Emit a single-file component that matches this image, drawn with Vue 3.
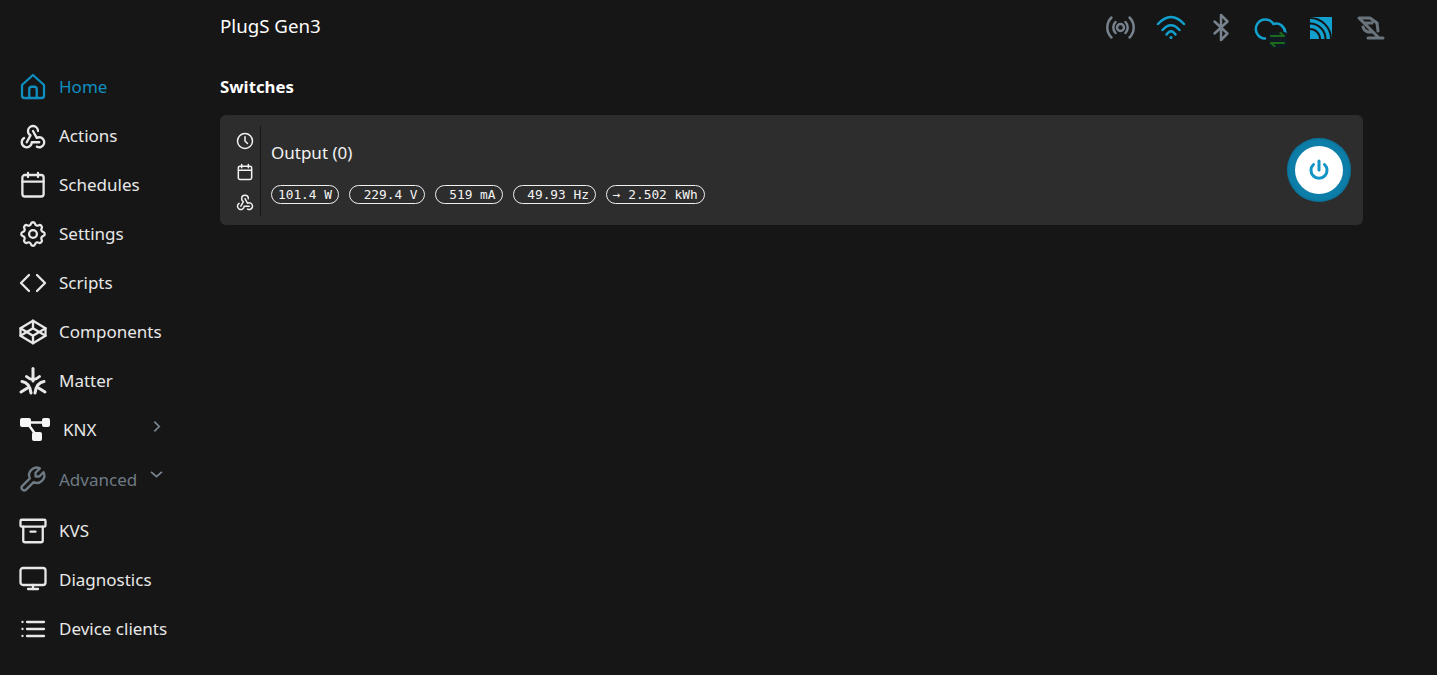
<script setup>
const top = [
  { vb: '0 0 24 24', d: ['M3.200 10.400L12 2.400l8.800 8V19a1.800 1.800 0 0 1-1.800 1.800H5A1.800 1.800 0 0 1 3.200 19z', 'M9 20.800v-7a2 2 0 0 1 2-2h2a2 2 0 0 1 2 2v7'], label: 'Home', active: true },
  { vb: '0 0 24 24', d: ['M4.876 13.610a4 4 0 1 0 6.124 3.390h6', 'M15.066 20.502a4 4 0 1 0 1.934-7.502c-.706 0-1.424.179-2 .5l-3-5.500', 'M16 8a4 4 0 1 0-8 0c0 1.506.77 2.818 2 3.500l-3 5.500'], label: 'Actions' },
  { vb: '0 0 24 24', d: ['M3.500 6a2 2 0 0 1 2-2h13a2 2 0 0 1 2 2v13.200a2 2 0 0 1-2 2h-13a2 2 0 0 1-2-2z', 'M16 2.400v3.200', 'M8 2.400v3.200', 'M3.500 9.300h17'], label: 'Schedules' },
  { vb: '0.500 0.500 23 23', d: ['M10.325 4.317c.426-1.756 2.924-1.756 3.350 0a1.724 1.724 0 0 0 2.573 1.066c1.543-.94 3.310.826 2.370 2.370a1.724 1.724 0 0 0 1.065 2.572c1.756.426 1.756 2.924 0 3.350a1.724 1.724 0 0 0-1.066 2.573c.94 1.543-.826 3.310-2.370 2.370a1.724 1.724 0 0 0-2.572 1.065c-.426 1.756-2.924 1.756-3.350 0a1.724 1.724 0 0 0-2.573-1.066c-1.543.94-3.310-.826-2.370-2.370a1.724 1.724 0 0 0-1.065-2.572c-1.756-.426-1.756-2.924 0-3.350a1.724 1.724 0 0 0 1.066-2.573c-.94-1.543.826-3.310 2.370-2.370 1 .608 2.296.07 2.572-1.065z', 'M9 12a3 3 0 1 0 6 0 3 3 0 0 0-6 0'], label: 'Settings' },
  { vb: '0 0 24 24', d: ['M8.800 5.600L2.400 12l6.400 6.400', 'M15.200 5.600L21.600 12l-6.400 6.400'], label: 'Scripts' },
  { vb: '0 0 24 24', d: ['M2 15l10 6 10-6-10-6z', 'M2 9l10 6 10-6-10-6z', 'M2 9v6', 'M22 9v6', 'M12 3v6', 'M12 15v6'], label: 'Components' },
]
const bottom = [
  { vb: '0 0 24 24', d: ['M3 3h18a1 1 0 0 1 1 1v3.500a1 1 0 0 1-1 1H3a1 1 0 0 1-1-1V4a1 1 0 0 1 1-1z', 'M4.200 8.500V20a1 1 0 0 0 1 1h13.600a1 1 0 0 0 1-1V8.500', 'M10 12.500h4'], label: 'KVS' },
  { vb: '0 0 24 24', d: ['M4 2.400h16a2 2 0 0 1 2 2V14a2 2 0 0 1-2 2H4a2 2 0 0 1-2-2V4.400a2 2 0 0 1 2-2z', 'M8 19.200h8', 'M12 16v3.200'], label: 'Diagnostics' },
  { vb: '0 0 24 24', d: ['M7.200 6.400h13.600', 'M7.200 12h13.600', 'M7.200 17.600h13.600', 'M3.600 6.400h.01', 'M3.600 12h.01', 'M3.600 17.600h.01'], label: 'Device clients' },
]
const pills = ['101.4 W', ' 229.4 V', ' 519 mA', ' 49.93 Hz', '→ 2.502 kWh']
</script>

<template>
  <div class="page">
    <aside class="side">
      <nav class="nav">
        <a v-for="it in top" :key="it.label" class="item" :class="{ active: it.active }">
          <svg class="ic" :viewBox="it.vb"><path v-for="p in it.d" :key="p" :d="p" /></svg>
          <span>{{ it.label }}</span>
        </a>
        <a class="item">
          <svg class="ic matter" viewBox="0 0 30 30">
            <path d="M15 2.500V15" />
            <path d="M8.500 10.500Q15 16.500 21.500 10.500" />
            <path d="M3 26L9.500 22" />
            <path d="M4 15.500Q11.500 16.500 13 27" />
            <path d="M27 26L20.500 22" />
            <path d="M26 15.500Q18.500 16.500 17 27" />
          </svg>
          <span>Matter</span>
        </a>
        <a class="item knx">
          <svg class="knxic" viewBox="0 0 30 23">
            <rect x="0" y="0" width="11" height="9" rx="2" />
            <rect x="22" y="0" width="8" height="9" rx="2" />
            <rect x="12" y="14" width="10" height="9" rx="2" />
            <path d="M9 4.500h15M8 6l8 11" />
          </svg>
          <span>KNX</span>
          <svg class="chev" viewBox="0 0 12 12"><path d="M4 1.500L8.500 6 4 10.500" /></svg>
        </a>
        <a class="item advanced">
          <svg class="ic" viewBox="0 0 24 24"><path transform="translate(24 0) scale(-1 1)" d="M7 10h3V7L6.500 3.500a6 6 0 0 1 8 8l6 6a2 2 0 0 1-3 3l-6-6a6 6 0 0 1-8-8L7 10" /></svg>
          <span>Advanced</span>
          <svg class="chev down" viewBox="0 0 12 12"><path d="M1 3.500L6 8l5-4.500" /></svg>
        </a>
        <a v-for="it in bottom" :key="it.label" class="item">
          <svg class="ic" :viewBox="it.vb"><path v-for="p in it.d" :key="p" :d="p" /></svg>
          <span>{{ it.label }}</span>
        </a>
      </nav>
    </aside>

    <main class="main">
      <header class="top">
        <h1>PlugS Gen3</h1>
        <div class="status">
          <span class="slot">
            <svg class="st grey" viewBox="0 0 30 30">
              <circle cx="14.500" cy="14.500" r="3.500" />
              <path d="M9.500 9a8 8 0 0 0 0 11M19.500 9a8 8 0 0 1 0 11M5.500 4.500a14 14 0 0 0 0 20M23.500 4.500a14 14 0 0 1 0 20" />
            </svg>
          </span>
          <span class="slot">
            <svg class="st blue" viewBox="0 0 30 30">
              <path d="M2 11Q15-3 28 11M6.500 17Q15 7.500 23.500 17M10.500 21.500Q15 15 19.500 21.500" />
              <circle class="dot" cx="15" cy="24.500" r="1.600" />
            </svg>
          </span>
          <span class="slot">
            <svg class="st grey" viewBox="0 0 30 30">
              <path d="M8.500 8.500L21.500 20.500 15 27V2l6.500 6.500L8.500 20.500" />
            </svg>
          </span>
          <span class="slot">
            <svg class="st blue" viewBox="0 0 30 30">
              <path d="M9 25.500A9.500 9.500 0 1 1 17.500 11C23 9 28.500 13 29.500 20" />
              <rect class="patch" x="13" y="19" width="18" height="16" rx="3" />
              <path class="gr" d="M15 23h13M24.500 20L28 23M28 30H15M18.500 33L15 30" />
            </svg>
          </span>
          <span class="slot">
            <svg class="st rss" viewBox="0 0 30 30">
              <path class="fillb" d="M4 4h22v22H4z" />
              <path class="cut" d="M4 16A10 10 0 0 1 14 26M4 10.500A15.500 15.500 0 0 1 19.500 26M4 5A21 21 0 0 1 25 26" />
            </svg>
          </span>
          <span class="slot">
            <svg class="st slash" viewBox="0 0 30 30">
              <path d="M3 5h11l7 5 1 8M3 5l19 19M9 10h7M7 14q1 4 5 5h5M12 25h15" />
            </svg>
          </span>
        </div>
      </header>

      <section>
        <h2>Switches</h2>
        <div class="card">
          <div class="tools">
            <svg class="ti" viewBox="0 0 24 24"><circle cx="12" cy="12" r="9" /><path d="M12 7v5l3 3" /></svg>
            <svg class="ti" viewBox="0 0 24 24"><path d="M4 7a2 2 0 0 1 2-2h12a2 2 0 0 1 2 2v12a2 2 0 0 1-2 2H6a2 2 0 0 1-2-2zM16 3v4M8 3v4M4 10h16" /></svg>
            <svg class="ti" viewBox="0 0 24 24"><path d="M4.876 13.610a4 4 0 1 0 6.124 3.390h6" /><path d="M15.066 20.502a4 4 0 1 0 1.934-7.502c-.706 0-1.424.179-2 .5l-3-5.500" /><path d="M16 8a4 4 0 1 0-8 0c0 1.506.77 2.818 2 3.500l-3 5.500" /></svg>
          </div>
          <div class="info">
            <div class="name">Output (0)</div>
            <div class="pills">
              <span v-for="p in pills" :key="p" class="pill">{{ p }}</span>
            </div>
          </div>
          <button class="power">
            <span class="knob">
              <svg viewBox="0 0 24 24"><path d="M12 3v9" /><path d="M6.500 6.500a8 8 0 1 0 11 0" /></svg>
            </span>
          </button>
        </div>
      </section>
    </main>
  </div>
</template>

<style>
html, body { margin: 0; background: #161616; }
</style>

<style scoped>
.page {
  width: 1437px;
  height: 675px;
  background: #161616;
  color: #f4f4f4;
  font-family: "Noto Sans", "Open Sans", sans-serif;
  display: flex;
  overflow: hidden;
}
.side { width: 220px; flex: none; padding-top: 62px; box-sizing: border-box; }
.nav { display: flex; flex-direction: column; }
.item {
  height: 49px;
  display: flex;
  align-items: center;
  gap: 11px;
  padding-left: 18px;
  font-size: 17px;
  color: #e8e8e8;
  position: relative;
}
.ic {
  width: 30px;
  height: 30px;
  flex: none;
  fill: none;
  stroke: currentColor;
  stroke-linecap: round;
  stroke-linejoin: round;
}
.ic path { stroke-width: 2.300px; vector-effect: non-scaling-stroke; }
.ic.matter path { stroke-width: 3px; }
.active { color: #0f8fc0; }
.knx { gap: 13px; padding-left: 20px; }
.knxic { width: 30px; height: 23px; flex: none; fill: #f6f6f6; }
.knxic path { fill: none; stroke: #f6f6f6; stroke-width: 2.500; }
.advanced { color: #6e7a84; height: 50px; margin-bottom: 2px; }
.chev {
  position: absolute;
  left: 150px;
  top: 15px;
  width: 13px;
  height: 13px;
  fill: none;
  stroke: #7a8690;
  stroke-width: 1.600;
}
.chev.down { top: 14px; }
.main { flex: 1; padding-right: 74px; min-width: 0; }
.top { height: 50px; display: flex; justify-content: space-between; align-items: center; }
h1 { margin: 0; font-size: 18.700px; font-weight: 400; color: #fff; }
.status { display: flex; margin-right: -33px; padding-top: 6px; }
.slot { width: 50px; height: 30px; display: flex; justify-content: center; }
.st {
  width: 30px;
  height: 30px;
  overflow: visible;
  fill: none;
  stroke-width: 2.500;
  stroke-linecap: round;
  stroke-linejoin: round;
}
.grey { stroke: #77828c; }
.blue { stroke: #12a0cf; }
.dot { fill: #12a0cf; stroke: none; }
.patch { fill: #101a20; stroke: none; }
.gr { stroke: #1c6b1c; stroke-width: 2.200; }
.fillb { fill: #12a0cf; stroke: none; }
.cut { stroke: #161616; stroke-width: 2; stroke-linecap: butt; }
.slash { stroke: #6a747c; stroke-width: 3; }
h2 { margin: 0; padding-top: 25px; height: 40px; font-size: 16.800px; font-weight: 700; color: #fff; line-height: 24px; }
.card {
  height: 110px;
  background: #2d2d2d;
  border-radius: 6px;
  display: flex;
  align-items: center;
  padding: 0 12px 0 10px;
  box-sizing: border-box;
}
.tools {
  width: 31px;
  height: 90px;
  margin-top: 2px;
  border-right: 1px solid #161616;
  display: flex;
  flex-direction: column;
  justify-content: space-between;
  align-items: center;
  padding: 5px 1px 4px 0;
  box-sizing: border-box;
}
.ti {
  width: 20px;
  height: 20px;
  fill: none;
  stroke: #f2f2f2;
  stroke-width: 1.800;
  stroke-linecap: round;
  stroke-linejoin: round;
}
.info { flex: 1; padding: 5px 0 0 10px; }
.name { font-size: 17px; line-height: 24px; color: #f2f2f2; margin-bottom: 20px; }
.pills { display: flex; gap: 10px; }
.pill {
  font-family: "DejaVu Sans Mono", monospace;
  font-size: 12.800px;
  height: 19px;
  padding: 0 6px;
  border: 1px solid #f0f0f0;
  border-radius: 10px;
  box-sizing: border-box;
  white-space: pre;
  color: #f4f4f4;
  display: flex;
  align-items: center;
}
.power {
  width: 64px;
  height: 64px;
  border: 0;
  padding: 0;
  border-radius: 50%;
  background: #0d7ea8;
  display: flex;
  align-items: center;
  justify-content: center;
  box-shadow: inset 0 0 3px #0a5f80;
}
.knob {
  width: 48px;
  height: 48px;
  border-radius: 50%;
  background: #fff;
  display: flex;
  align-items: center;
  justify-content: center;
}
.knob svg {
  width: 24px;
  height: 24px;
  fill: none;
  stroke: #1295c4;
  stroke-width: 3;
  stroke-linecap: round;
}
</style>
